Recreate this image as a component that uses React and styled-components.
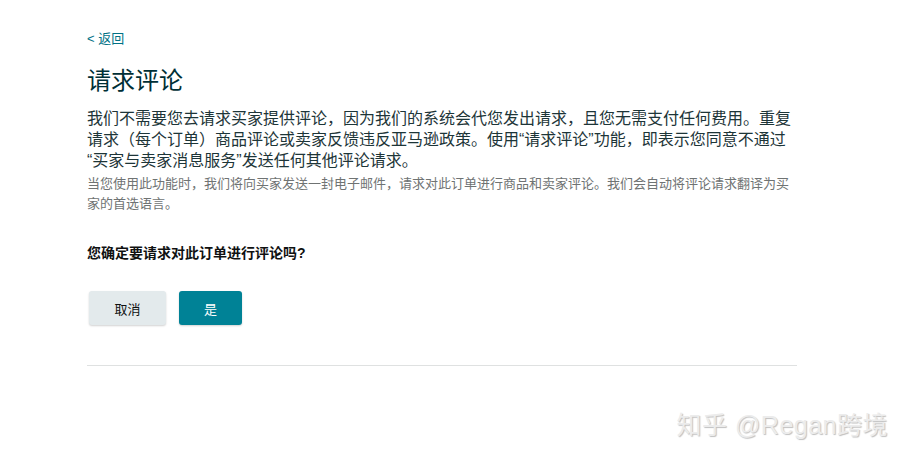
import React from 'react';
import styled, { createGlobalStyle, css } from 'styled-components';

const GlobalStyle = createGlobalStyle`
  html, body {
    margin: 0;
    padding: 0;
    background: #fff;
  }
  body {
    font-family: "Liberation Sans", "Noto Sans CJK SC", sans-serif;
    color: #0f1111;
  }
`;

const Page = styled.div`
  position: relative;
  width: 913px;
  height: 464px;
  overflow: hidden;
`;

const Content = styled.div`
  width: 710px;
  padding: 29px 0 0 87px;
  display: flex;
  flex-direction: column;
`;

const BackLink = styled.a`
  font-size: 13px;
  line-height: 18px;
  color: #007185;
  text-decoration: none;
  cursor: pointer;
`;

const Title = styled.h1`
  margin: 17px 0 0;
  font-size: 24px;
  line-height: 32px;
  font-weight: 400;
  color: #002f36;
`;

const Lead = styled.p`
  margin: 11px 0 0;
  font-size: 16px;
  line-height: 21px;
  color: #1d3538;
`;

const Note = styled.p`
  margin: 3px 0 0;
  font-size: 13px;
  line-height: 20px;
  color: #6f7373;
`;

const Question = styled.p`
  margin: 29px 0 0;
  font-size: 14px;
  line-height: 20px;
  font-weight: 700;
  color: #0f1111;
`;

const Actions = styled.div`
  display: flex;
  gap: 13px;
  margin: 28px 0 0 2px;
`;

const Button = styled.button`
  height: 34px;
  padding: 0;
  border: none;
  border-radius: 3px;
  font-family: inherit;
  font-size: 13px;
  cursor: pointer;
  box-shadow: 0 1px 2px rgba(0, 0, 0, 0.18);
  ${p => p.primary
    ? css`
      width: 63px;
      background: #008296;
      color: #fff;
    `
    : css`
      width: 77px;
      background: #e3eaec;
      color: #0f1111;
    `}
`;

const Divider = styled.hr`
  margin: 40px 0 0;
  border: none;
  border-top: 1px solid #dfe1e1;
  width: 710px;
`;

const Watermark = styled.div`
  position: absolute;
  right: 25px;
  bottom: 24px;
  font-size: 25px;
  line-height: 30px;
  color: #ececec;
  text-shadow: 1px 1px 1px rgba(0, 0, 0, 0.25);
  letter-spacing: 0.5px;
`;

export default function App() {
  return (
    <Page lang="zh-CN">
      <GlobalStyle />
      <Content>
        <div>
          <BackLink>&lt; 返回</BackLink>
        </div>
        <Title>请求评论</Title>
        <Lead>
          我们不需要您去请求买家提供评论，因为我们的系统会代您发出请求，且您无需支付任何费用。重复请求（每个订单）商品评论或卖家反馈违反亚马逊政策。使用“请求评论”功能，即表示您同意不通过<wbr />“买家与卖家消息服务”发送任何其他评论请求。
        </Lead>
        <Note>
          当您使用此功能时，我们将向买家发送一封电子邮件，请求对此订单进行商品和卖家评论。我们会自动将评论请求翻译为买家的首选语言。
        </Note>
        <Question>您确定要请求对此订单进行评论吗?</Question>
        <Actions>
          <Button>取消</Button>
          <Button primary>是</Button>
        </Actions>
        <Divider />
      </Content>
      <Watermark>知乎 @Regan跨境</Watermark>
    </Page>
  );
}
